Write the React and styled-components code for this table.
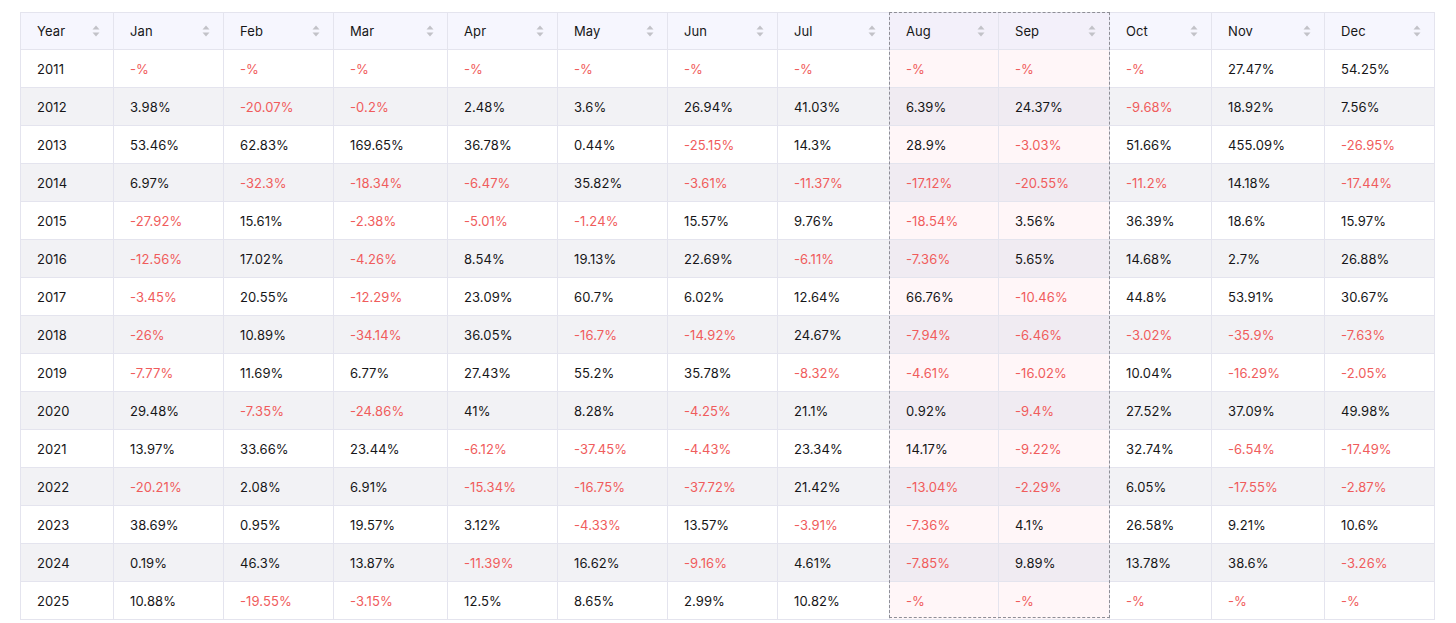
import React from "react";
import styled, { createGlobalStyle } from "styled-components";

const Global = createGlobalStyle`
  html, body { margin: 0; padding: 0; background: #ffffff; }
  body { font-family: Inter, "Noto Sans", "Liberation Sans", sans-serif; color: #161618; }
`;

const Page = styled.div`
  padding: 12px 22px 0 20px;
`;

const Frame = styled.div`
  position: relative;
  width: 1414px;
`;

const Table = styled.table`
  width: 1414px;
  table-layout: fixed;
  border-collapse: collapse;
  font-size: 13px;
  line-height: 16px;
  letter-spacing: 0.1px;
`;

const HeadCell = styled.th`
  height: 36px;
  padding: 0 13px 0 16px;
  text-align: left;
  font-weight: 400;
  color: #161618;
  border: 1px solid #e4e4ee;
  background: ${(p) => (p.$hl ? "#f3f0fa" : "#f6f6fe")};
`;

const HeadInner = styled.div`
  display: flex;
  align-items: center;
  justify-content: space-between;
`;

const Cell = styled.td`
  height: 37px;
  padding: 0 16px;
  border: 1px solid #e4e4ee;
  white-space: nowrap;
  color: ${(p) => (p.$neg ? "#f05c5c" : "#161618")};
  background: ${(p) =>
    p.$hl ? (p.$alt ? "#f0ebf2" : "#fff6f8") : p.$alt ? "#f2f2f5" : "#ffffff"};
`;

const Highlight = styled.div`
  position: absolute;
  top: 0;
  bottom: 2px;
  border: 1px dashed #8e8e96;
  pointer-events: none;
  box-sizing: border-box;
`;

const SortIcon = () => (
  <svg width="8" height="12" viewBox="0 0 8 12">
    <path d="M4 0.5 L7.5 4.5 L0.5 4.5 Z" fill="#c2c2c8" />
    <path d="M4 11.5 L7.5 7.5 L0.5 7.5 Z" fill="#c2c2c8" />
  </svg>
);

const columns = [
  { key: "Year", w: 93 },
  { key: "Jan", w: 110 },
  { key: "Feb", w: 110 },
  { key: "Mar", w: 114 },
  { key: "Apr", w: 110 },
  { key: "May", w: 110 },
  { key: "Jun", w: 110 },
  { key: "Jul", w: 112 },
  { key: "Aug", w: 109, hl: true },
  { key: "Sep", w: 111, hl: true },
  { key: "Oct", w: 102 },
  { key: "Nov", w: 113 },
  { key: "Dec", w: 110 },
];

const raw = [
  ["2011", "-", "-", "-", "-", "-", "-", "-", "-", "-", "-", "27.47", "54.25"],
  ["2012", "3.98", "-20.07", "-0.2", "2.48", "3.6", "26.94", "41.03", "6.39", "24.37", "-9.68", "18.92", "7.56"],
  ["2013", "53.46", "62.83", "169.65", "36.78", "0.44", "-25.15", "14.3", "28.9", "-3.03", "51.66", "455.09", "-26.95"],
  ["2014", "6.97", "-32.3", "-18.34", "-6.47", "35.82", "-3.61", "-11.37", "-17.12", "-20.55", "-11.2", "14.18", "-17.44"],
  ["2015", "-27.92", "15.61", "-2.38", "-5.01", "-1.24", "15.57", "9.76", "-18.54", "3.56", "36.39", "18.6", "15.97"],
  ["2016", "-12.56", "17.02", "-4.26", "8.54", "19.13", "22.69", "-6.11", "-7.36", "5.65", "14.68", "2.7", "26.88"],
  ["2017", "-3.45", "20.55", "-12.29", "23.09", "60.7", "6.02", "12.64", "66.76", "-10.46", "44.8", "53.91", "30.67"],
  ["2018", "-26", "10.89", "-34.14", "36.05", "-16.7", "-14.92", "24.67", "-7.94", "-6.46", "-3.02", "-35.9", "-7.63"],
  ["2019", "-7.77", "11.69", "6.77", "27.43", "55.2", "35.78", "-8.32", "-4.61", "-16.02", "10.04", "-16.29", "-2.05"],
  ["2020", "29.48", "-7.35", "-24.86", "41", "8.28", "-4.25", "21.1", "0.92", "-9.4", "27.52", "37.09", "49.98"],
  ["2021", "13.97", "33.66", "23.44", "-6.12", "-37.45", "-4.43", "23.34", "14.17", "-9.22", "32.74", "-6.54", "-17.49"],
  ["2022", "-20.21", "2.08", "6.91", "-15.34", "-16.75", "-37.72", "21.42", "-13.04", "-2.29", "6.05", "-17.55", "-2.87"],
  ["2023", "38.69", "0.95", "19.57", "3.12", "-4.33", "13.57", "-3.91", "-7.36", "4.1", "26.58", "9.21", "10.6"],
  ["2024", "0.19", "46.3", "13.87", "-11.39", "16.62", "-9.16", "4.61", "-7.85", "9.89", "13.78", "38.6", "-3.26"],
  ["2025", "10.88", "-19.55", "-3.15", "12.5", "8.65", "2.99", "10.82", "-", "-", "-", "-", "-"],
];

const hlLeft = columns.slice(0, 8).reduce((s, c) => s + c.w, 0);
const hlWidth = columns[8].w + columns[9].w;

export default function App() {
  return (
    <Page>
      <Global />
      <Frame>
        <Table>
          <colgroup>
            {columns.map((c) => (
              <col key={c.key} style={{ width: c.w }} />
            ))}
          </colgroup>
          <thead>
            <tr>
              {columns.map((c) => (
                <HeadCell key={c.key} $hl={c.hl}>
                  <HeadInner>
                    <span>{c.key}</span>
                    <SortIcon />
                  </HeadInner>
                </HeadCell>
              ))}
            </tr>
          </thead>
          <tbody>
            {raw.map((row, ri) => (
              <tr key={row[0]}>
                {row.map((v, ci) => {
                  const isYear = ci === 0;
                  const neg = !isYear && v.startsWith("-");
                  return (
                    <Cell
                      key={ci}
                      $neg={neg}
                      $alt={ri % 2 === 1}
                      $hl={columns[ci].hl}
                    >
                      {isYear ? v : `${v}%`}
                    </Cell>
                  );
                })}
              </tr>
            ))}
          </tbody>
        </Table>
        <Highlight style={{ left: hlLeft, width: hlWidth + 1 }} />
      </Frame>
    </Page>
  );
}
